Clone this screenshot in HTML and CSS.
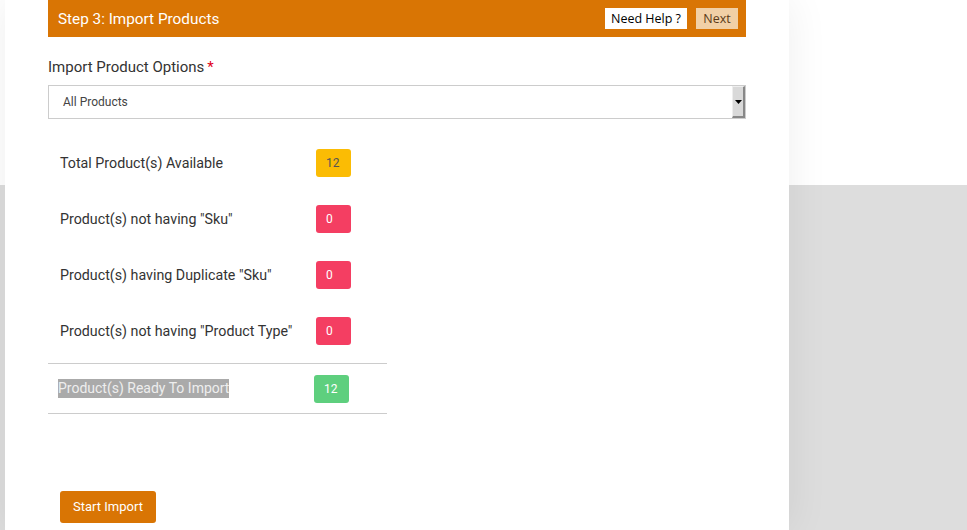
FILE: index.html
```html
<!DOCTYPE html>
<html>
<head>
<meta charset="utf-8">
<link rel="stylesheet" href="styles.css">
</head>
<body>
<div class="panel">
  <div class="step-head">
    <span class="step-title">Step 3: Import Products</span>
    <div class="head-actions">
      <span class="help-btn">Need Help ?</span>
      <span class="next-btn">Next</span>
    </div>
  </div>

  <div class="field-label">Import Product Options<span class="req">*</span></div>
  <div class="select">
    <span class="select-text">All Products</span>
    <span class="select-arrow"><svg width="7" height="4" viewBox="0 0 7 4"><path d="M0 0h7L3.5 4z" fill="#000"/></svg></span>
  </div>

  <div class="stats">
    <div class="stat-row"><span class="stat-label">Total Product(s) Available</span><span class="badge badge-yellow">12</span></div>
    <div class="stat-row"><span class="stat-label">Product(s) not having "Sku"</span><span class="badge badge-red">0</span></div>
    <div class="stat-row"><span class="stat-label">Product(s) having Duplicate "Sku"</span><span class="badge badge-red">0</span></div>
    <div class="stat-row"><span class="stat-label">Product(s) not having "Product Type"</span><span class="badge badge-red">0</span></div>
    <div class="stat-row ready-row"><span class="stat-label"><span class="ready-text">Product(s) Ready To Import</span></span><span class="badge badge-green">12</span></div>
  </div>

  <div class="actions">
    <span class="start-btn">Start Import</span>
  </div>
</div>
</body>
</html>
```

FILE: styles.css
```css
html, body {
  margin: 0;
  padding: 0;
  height: 100%;
}
body {
  background: linear-gradient(to bottom, #ffffff 0, #ffffff 185px, #dddddd 185px, #dddddd 100%);
  font-family: Roboto, "Liberation Sans", sans-serif;
  overflow: hidden;
}
.panel {
  margin-left: 5px;
  width: 784px;
  height: 530px;
  background: #ffffff;
  box-shadow: 0 0 40px rgba(0, 0, 0, 0.07);
  padding-left: 43px;
  box-sizing: border-box;
}
.step-head {
  width: 698px;
  height: 37px;
  background: #d97504;
  display: flex;
  align-items: center;
  justify-content: space-between;
  box-sizing: border-box;
  padding: 0 8px 0 10px;
}
.step-title {
  color: #ffffff;
  font-size: 15.3px;
}
.head-actions {
  display: flex;
  gap: 9px;
  align-items: center;
}
.help-btn, .next-btn {
  font-family: "Open Sans", sans-serif;
  font-size: 12.5px;
  height: 21px;
  line-height: 21px;
  display: inline-block;
  text-align: center;
}
.help-btn {
  background: #ffffff;
  color: #000000;
  width: 82px;
}
.next-btn {
  background: #f1d0a6;
  color: #5a3a18;
  width: 42px;
}
.field-label {
  margin-top: 21px;
  font-size: 15px;
  color: #333333;
  line-height: 18px;
}
.req {
  color: #e0001b;
  margin-left: 3px;
}
.select {
  margin-top: 9px;
  width: 698px;
  height: 34px;
  border: 1px solid #cccccc;
  box-sizing: border-box;
  display: flex;
  align-items: center;
  justify-content: space-between;
}
.select-text {
  font-size: 12px;
  color: #444444;
  padding-left: 14px;
}
.select-arrow {
  width: 13px;
  height: 32px;
  box-sizing: border-box;
  background: #d9d9d9;
  border-left: 1px solid #eeeeee;
  border-top: 1px solid #eeeeee;
  border-right: 2px solid #888888;
  border-bottom: 2px solid #888888;
  display: flex;
  align-items: center;
  justify-content: center;
}
.stats {
  margin-top: 16px;
  width: 339px;
}
.stat-row {
  height: 56px;
  display: flex;
  align-items: center;
  padding-left: 12px;
}
.stat-label {
  font-size: 14.25px;
  color: #333333;
  width: 256px;
}
.badge {
  width: 35px;
  height: 28px;
  line-height: 28px;
  border-radius: 3px;
  font-size: 12px;
  box-sizing: border-box;
  padding-left: 10px;
}
.badge-yellow { background: #fbbc04; color: #555555; }
.badge-red { background: #f43e62; color: #ffffff; }
.badge-green { background: #5ecf7e; color: #ffffff; }
.ready-row {
  margin-top: 4px;
  height: 49px;
  border-top: 1px solid #cccccc;
  border-bottom: 1px solid #cccccc;
  padding-left: 10px;
}
.ready-text {
  background: #aaaaaa;
  color: #eeeeee;
  font-size: 14px;
  line-height: 19px;
  display: inline-block;
}
.actions {
  margin-top: 77px;
  padding-left: 12px;
}
.start-btn {
  display: inline-block;
  width: 96px;
  height: 32px;
  line-height: 32px;
  text-align: center;
  background: #d97504;
  color: #ffffff;
  font-size: 13px;
  border-radius: 3px;
}
```
